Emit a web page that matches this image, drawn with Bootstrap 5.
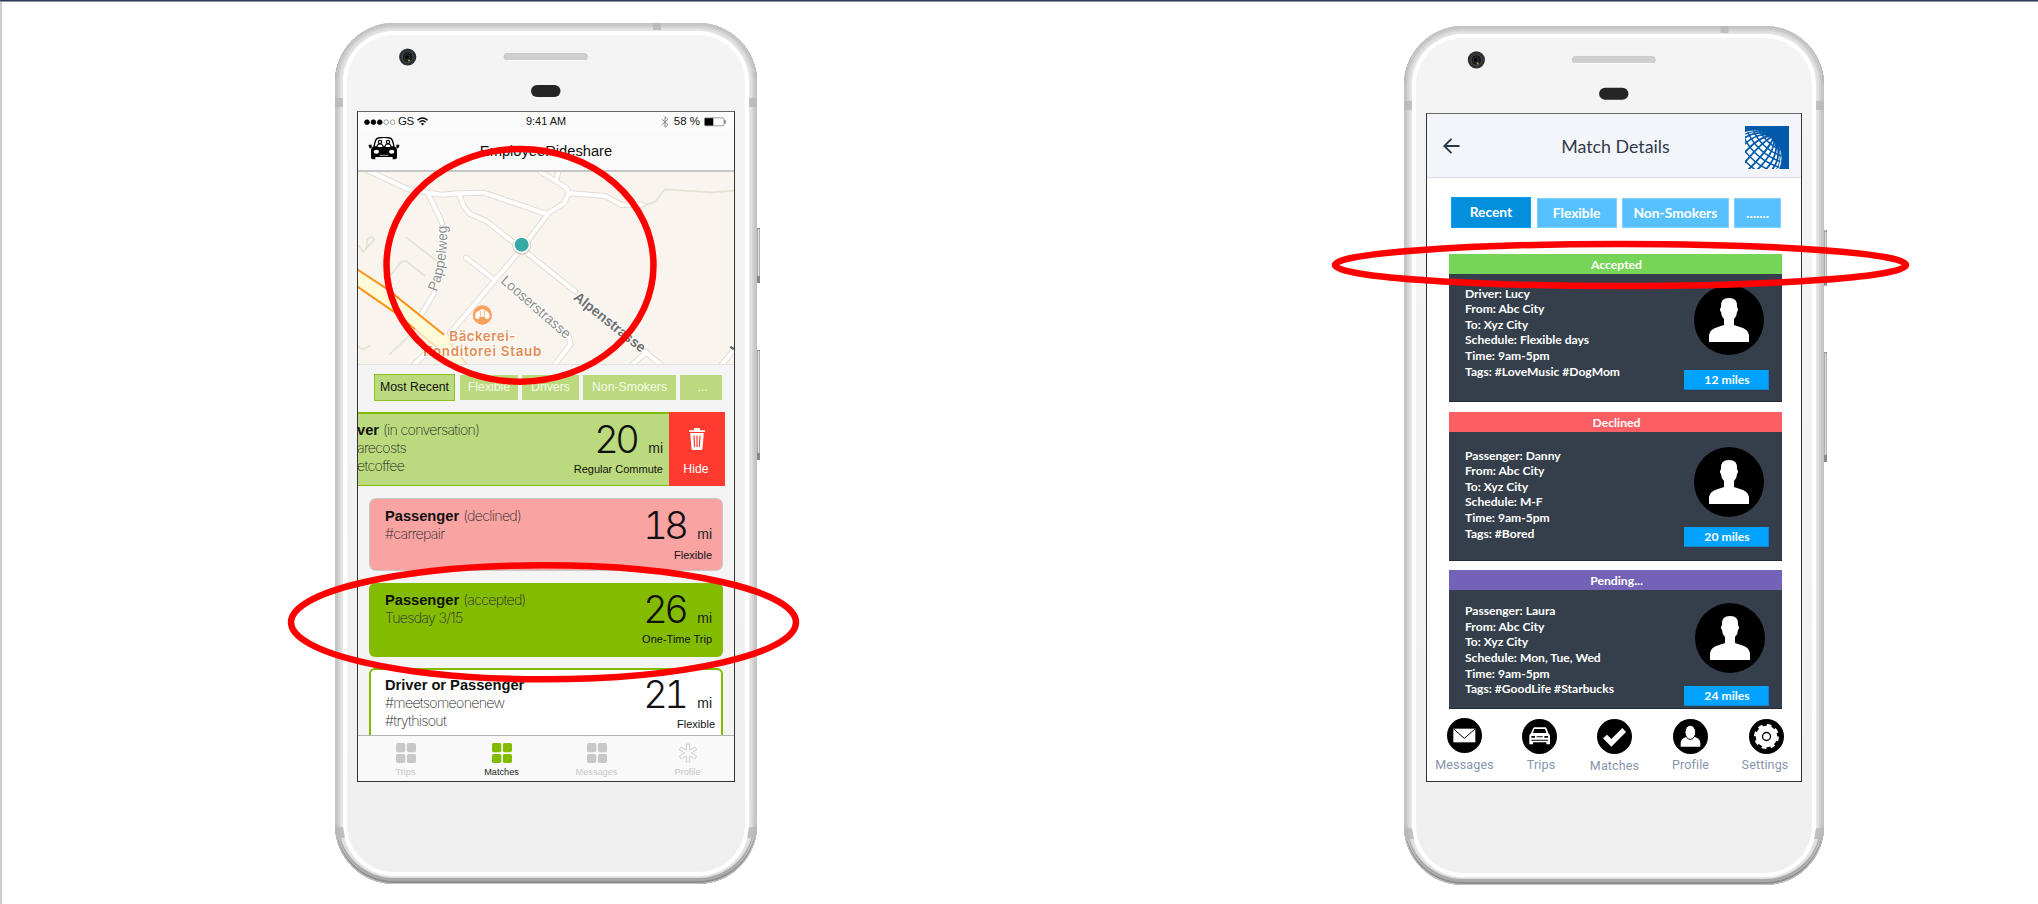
<!DOCTYPE html>
<html lang="en">
<head>
<meta charset="utf-8">
<meta name="viewport" content="width=device-width, initial-scale=1">
<title>Rideshare matches</title>
<link href="https://cdn.jsdelivr.net/npm/bootstrap@5.3.0/dist/css/bootstrap.min.css" rel="stylesheet">
<style>
body{background:#fff;font-family:"Liberation Sans",Arial,sans-serif;color:#111;overflow:hidden}
.stage{width:2038px;height:904px;border-top:1px solid #2d3a55;overflow:hidden}
.stage::before{content:"";position:absolute;left:0;right:0;top:0;height:1px;background:#8f96a8}
.stage::after{content:"";position:absolute;left:0;top:1px;bottom:0;width:2px;background:#ccc}
/* handset shell */
.phone{border-radius:59px;background:linear-gradient(#f4f4f4,#efefef);
 box-shadow:inset 0 0 0 1px #c3c3c3,inset 0 -2px 0 1px #8d8d8d,inset 0 0 0 3px #c6c6c6,inset 0 -3px 0 3px #a9a9a9,inset 0 0 0 5px #d3d3d3,inset 0 0 0 7px #e0e0e0,inset 0 0 0 8px #e8e8e8,inset 0 0 1px 12px #fff}
.phone-a{width:422px;height:861px;margin:22px 0 0 335px;padding:88px 22px 0}
.phone-b{width:420px;height:859px;margin:25px 0 0 647px;padding:87px 22px 0}
.shell{left:0;top:0;overflow:visible;pointer-events:none}
.screen{border:1px solid #333;border-top:1px solid #666;overflow:hidden}
.phone-a .screen{width:378px;height:671px;background:#f4f4f4}
.phone-b .screen{width:376px;height:669px;background:#fff;font-family:Lato,sans-serif}
.ring{overflow:visible;pointer-events:none;z-index:5;left:0;top:0}
/* first app */
.status{height:19px;background:#fbfbfb;font-size:11.5px;line-height:19px;padding:0 8px 0 5px}
.status>*{flex:1 1 0}
.clock{font-size:10.9px;padding-left:3px}
.app-head{height:41px;background:#fafafa;border-bottom:2px solid #c6c6c8}
.app-title{font-size:14.7px;line-height:20px;padding-top:10px}
.filters{height:48px;padding:9px 11px 0 16px;gap:4px;border-top:1px solid #e2e2e2}
.chip{height:25px;line-height:25px;font-size:12.3px;background:#bbd97d;color:#f7fbe9;text-align:center;margin-top:1px}
.chip.on{background:#bbd97d;border:1px solid #8cc11f;color:#111;line-height:25px;height:27px;margin:0 1px 0 0}
.trip{position:relative;height:74px;width:354px;margin:0 0 11px 11px;padding:8px 11px 0 16px;border-radius:6px;font-size:14.7px;line-height:18px}
.trip b{letter-spacing:-.02px}
.thin{font-family:Inter,sans-serif;font-weight:200;font-size:14.2px;letter-spacing:-.7px;color:#2a2a2a}
.sum{text-align:right}
.dist{height:36px;line-height:36px;font-family:Inter,sans-serif;font-weight:300;font-size:38px;font-variant-numeric:tabular-nums;letter-spacing:-3.6px;white-space:nowrap}
.dist small{font:14px "Liberation Sans",sans-serif;letter-spacing:0;margin-left:12px;color:#222}
.kind{font-size:11px;line-height:16px;margin-top:4px;white-space:nowrap}
.t-talk{background:#bbd97d;border-top:2px solid #82bb00;border-bottom:1px solid #82bb00;border-radius:0;margin-left:0;width:311px;padding:7px 6px 0 0}
.t-talk .who{margin-left:-1px}
.t-no{background:#f9a3a2;box-shadow:0 0 0 1px #c9c9c9}
.t-yes{background:#82bb00}
.t-open{background:#fff;border:2px solid #82bb00;padding:6px 6px 0 14px}
.hide-btn{width:56px;height:74px;background:#ff3b30;color:#fff;font-size:12.3px;line-height:16px;padding-top:16px}
.tabs{height:46px;background:#f9f9f9;border-top:1px solid #b5b5b5;bottom:0;left:0;width:376px;font-size:9.2px;line-height:12px;color:#c8c8c8;padding-top:7px}
.tabs>div,.dock>div{flex:none}
/* second app */
.bar-b{height:64px;background:#f4f5fa;border-bottom:1px solid #d9dae2}
.title-b{font-size:17.8px;line-height:24px;color:#2f3b4a}
.pills{height:76px;padding:19px 20px 0 24px}
.pill{background:#57c1ff;border:1px solid #7ed0ff;color:#fff;font-weight:700;font-size:13.8px;line-height:27px;height:30px;text-align:center}
.pill.on{background:#048fdd;border-color:#00a1ff;height:31px;line-height:28px}
.match{width:333px;margin-left:22px;color:#fff;font-weight:700;font-size:12.1px}
.match-h{height:20px;line-height:21px;text-align:center;font-size:12.2px;padding-left:2px}
.match-b{height:129px;background:#353f4b;line-height:15.65px;padding:0 13px 0 16px;border-bottom:1px solid #222c38}
.miles{width:85px;height:20px;line-height:20px;background:#00a2ff;text-align:center;font-size:12.2px;border:1px solid #0d86cf;border-width:0 1px 1px 0;padding-left:2px}
.dock{font-family:Roboto,sans-serif;font-size:12.5px;line-height:14px;color:#8694ab;letter-spacing:.15px;padding-top:9px}
.dock svg,.tabs svg{display:block;margin:0 auto}
</style>
</head>
<body>
<svg width="0" height="0" class="position-absolute">
 <defs>
  <symbol id="face" viewBox="0 0 70 70"><ellipse cx="35" cy="35" rx="35" ry="35"/><path fill="#fff" d="M15 57V50Q16 44 24 42L30 40V34Q27 31 27 27Q25 25 27 22Q26 13 35 13Q44 13 43 22Q45 25 43 27Q43 31 40 34V40L46 42Q54 44 55 50V57Z"/></symbol>
  <symbol id="grid4" viewBox="0 0 20 20"><g fill="currentColor"><rect width="9.3" height="9.3" rx="1.7"/><rect x="10.9" width="9.1" height="9.3" rx="1.7"/><rect y="11" width="9.3" height="9" rx="1.7"/><rect x="10.9" y="11" width="9.1" height="9" rx="1.7"/></g></symbol>
  <linearGradient id="key"><stop stop-color="#777"/><stop offset=".4" stop-color="#eee"/><stop offset="1" stop-color="#999"/></linearGradient>
  <symbol id="shell" viewBox="0 0 426 861">
   <g fill="#b8b8b8" opacity=".85"><rect x="318" y="0" width="8" height="7"/><rect y="75" width="8" height="9"/><rect x="414" y="75" width="8" height="9"/><path d="M0 804H8L10 815H2ZM422 804H414L412 815H420Z"/></g>
   <g fill="url(#key)"><rect x="422" y="205" width="3" height="55"/><rect x="422" y="327" width="3" height="110"/></g>
   <path fill="#888" d="M422 253h3v7h-3zM422 430h3v7h-3zM422 205h3v1h-3zM422 327h3v1h-3z"/>
   <circle cx="72.7" cy="34" r="8.6" fill="#2e2f31"/><circle cx="72.7" cy="34" r="5.4" fill="#17181a" stroke="#4b4c4f"/><circle cx="72" cy="34" r="2.5" fill="#050505" stroke="#333"/><circle cx="74" cy="37.5" r="1.1" fill="#8c9b2e"/>
   <rect x="169" y="30.5" width="83.5" height="6.5" rx="3.2" fill="#cfcfcf" stroke="#bababa" stroke-width=".6"/><path d="M172 37.4h78" stroke="#fff"/>
   <rect x="196" y="62" width="29.5" height="12" rx="6" fill="#252525"/>
  </symbol>
  <path id="roads" d="M80 30L205 88 305 104 355 100 430 98 620 162 672 130 686 100 680 84 600 34M650 55L656 30M690 100L795 108 845 135 908 134M265 104L296 165 306 190M282 400L240 470M358 104L372 140 390 162 440 184 545 266 625 160M545 266L330 520M545 266L706 395M378 293L464 360M684 520L692 552 640 620M915 575L970 620M920 576L870 620M1182 570L1140 620M275 565L215 620"/>
 </defs>
</svg>

<main class="stage position-relative d-flex align-items-start">
 <section class="phone phone-a position-relative flex-shrink-0">
  <svg class="shell position-absolute" width="426" height="861"><use href="#shell"/></svg>
  <div class="screen position-relative">
   <div class="status d-flex align-items-center">
    <div class="d-flex align-items-center">
     <svg width="33" height="8" viewBox="0 0 33 8"><g stroke="#000" stroke-width=".7"><circle cx="4" cy="4.2" r="2.4"/><circle cx="10.4" cy="4.2" r="2.4"/><circle cx="16.8" cy="4.2" r="2.4"/></g><g fill="none" stroke="#777" stroke-width=".7"><circle cx="23.2" cy="4.2" r="2.3"/><circle cx="29.6" cy="4.2" r="2.3"/></g></svg>
     <span style="margin-left:2px;letter-spacing:-.5px">GS</span>
     <svg style="margin-left:3px" width="11" height="9" viewBox="0 0 11 9" fill="none" stroke="#000" stroke-width="1.4"><path d="M.5 3.2Q5.5-1.2 10.5 3.2M2.4 5.2Q5.5 2.5 8.6 5.2"/><path d="M3.8 6.6L5.5 8.6 7.2 6.6Q5.5 5.4 3.8 6.6Z" fill="#000" stroke="none"/></svg>
    </div>
    <div class="clock text-center">9:41 AM</div>
    <div class="d-flex align-items-center justify-content-end">
     <svg width="8" height="12" viewBox="0 0 8 12" fill="none" stroke="#8a8a8a"><path d="M.8 3.2L7 8.6 4 11.3V.7L7 3.4.8 8.8"/></svg>
     <span style="font-size:11.5px;margin:0 4px 0 5px">58 %</span>
     <svg width="22" height="10" viewBox="0 0 22 10"><rect x=".5" y=".8" width="19.5" height="8" rx="1.2" fill="none" stroke="#777" stroke-width=".7"/><path d="M.8 1.2H9.3V8.5H.8Z"/><path d="M21 3.3v3" stroke="#333"/></svg>
    </div>
   </div>
   <div class="app-head position-relative">
    <svg class="position-absolute" style="left:10px;top:6px" width="32" height="23" viewBox="0 0 96 69">
     <path d="M18 30Q22 4 30 3Q48-1 66 3Q74 4 78 30" fill="none" stroke="#000" stroke-width="4"/>
     <path d="M9 38Q12 28 22 28H74Q84 28 87 38V61Q87 67 81 67H74V60H22V67H15Q9 67 9 61Z"/>
     <path d="M2 23h9v11H6q-5-5-4-11ZM94 23h-9v11h5q5-5 4-11Z"/>
     <g fill="#fff" stroke="#000" stroke-width="3.5"><circle cx="36" cy="15" r="5"/><circle cx="60" cy="15" r="5"/><path d="M27 30q0-9 9-9t9 9M51 30q0-9 9-9t9 9"/></g>
     <ellipse cx="25" cy="44" rx="8" ry="6" fill="#fff"/><ellipse cx="71" cy="44" rx="8" ry="6" fill="#fff"/><path d="M35 55h26" stroke="#fff" stroke-width="2"/>
    </svg>
    <div class="app-title text-center">EmployeeRideshare</div>
   </div>
   <svg class="d-block" width="376" height="192" viewBox="54 36 1128 576" font-family="Liberation Sans,sans-serif">
    <path fill="#f9f4ed" d="M54 36h1128v576H54z"/>
    <g fill="none" stroke="#e3e2d5" stroke-width="5"><path d="M198 232L290 303M148 350L185 304 200 304 255 348M54 560L70 568 92 556M148 584L240 495M54 255L70 275 104 238 95 230 82 238 78 270M900 140L945 125 975 88 1115 97 1182 92"/></g>
    <use href="#roads" fill="none" stroke="#e2dcd7" stroke-width="18" stroke-linejoin="round" stroke-linecap="round"/>
    <use href="#roads" fill="none" stroke="#fff" stroke-width="12" stroke-linejoin="round" stroke-linecap="round"/>
    <path d="M50 327L312 524 380 612 320 612 220 502 50 378Z" fill="#fffbd8"/>
    <path d="M50 327L140 386 312 524M50 378L165 458 225 508" fill="none" stroke="#fb9418" stroke-width="6"/><path d="M225 508L300 570M330 550L380 612" stroke="#f9d6a0" stroke-width="4"/>
    <circle cx="545" cy="256" r="28" fill="#cfc9c1"/><circle cx="545" cy="254" r="26" fill="#fff"/><circle cx="545" cy="254" r="21" fill="#36aaa2"/>
    <path id="pap" d="M290 396Q328 300 319 188" fill="none"/>
    <g fill="#8e8e8e" stroke="#fff" stroke-width="5" paint-order="stroke">
     <text textLength="203" lengthAdjust="spacingAndGlyphs" font-size="43"><textPath href="#pap">Pappelweg</textPath></text>
     <text transform="translate(480 366) rotate(41)" textLength="262" lengthAdjust="spacingAndGlyphs" font-size="43">Looserstrasse</text>
     <text transform="translate(698 416) rotate(38.5)" textLength="262" lengthAdjust="spacingAndGlyphs" font-size="43" font-weight="bold" fill="#717171">Alpenstrasse</text>
    </g>
    <path d="M1171 560L1182 568" stroke="#666" stroke-width="7"/>
    <circle cx="427" cy="465" r="29" fill="#f7a15c"/><path d="M407 475Q402 458 415 453 427 442 439 453 452 458 447 475L438 478 435 470H419L416 478Z" fill="#fff"/><path d="M420 452l2 16M434 452l-2 16" stroke="#f7a15c" stroke-width="2.5"/>
    <g font-size="40" font-weight="600" fill="#e18d55" stroke="#fff" stroke-width="5" paint-order="stroke" font-family="Inter,sans-serif"><text x="328" y="543" textLength="198">Bäckerei-</text><text x="250" y="587" textLength="354">Konditorei Staub</text></g>
   </svg>
   <div class="filters d-flex">
    <div class="chip on" style="width:81px">Most Recent</div><div class="chip" style="width:58px">Flexible</div><div class="chip" style="width:57px">Drivers</div><div class="chip" style="width:93px">Non-Smokers</div><div class="chip" style="width:42px;padding-left:3px">...</div>
   </div>
   <div class="d-flex">
    <div class="trip t-talk d-flex justify-content-between">
     <div class="who"><b>ver</b> <span class="thin">(in conversation)</span><br><span class="thin">arecosts</span><br><span class="thin">etcoffee</span></div>
     <div class="sum"><div class="dist">20<small>mi</small></div><div class="kind">Regular Commute</div></div>
    </div>
    <div class="hide-btn text-center">
     <svg class="d-block mx-auto" width="16" height="22" viewBox="0 0 16 22"><path d="M0 2.2H5V.8Q5 0 6 0H10Q11 0 11 .8V2.2H16V4H0ZM1.2 5H14.8L13.5 20.5Q13.4 22 12 22H4Q2.6 22 2.5 20.5Z" fill="#fff"/><path d="M5 7.5L5.6 19M8 7.5V19M11 7.5L10.4 19" stroke="#ff3b30" stroke-width="1.2"/></svg>
     <div style="margin-top:11px;margin-right:2px">Hide</div>
    </div>
   </div>
   <div class="trip t-no d-flex justify-content-between" style="height:71px;width:352px;margin:2px 0 13px 12px;padding-left:15px;padding-right:10px">
    <div><b>Passenger</b> <span class="thin">(declined)</span><br><span class="thin">#carrepair</span></div>
    <div class="sum"><div class="dist">18<small>mi</small></div><div class="kind">Flexible</div></div>
   </div>
   <div class="trip t-yes d-flex justify-content-between">
    <div><b>Passenger</b> <span class="thin">(accepted)</span><br><span class="thin">Tuesday 3/15</span></div>
    <div class="sum"><div class="dist">26<small>mi</small></div><div class="kind">One-Time Trip</div></div>
   </div>
   <div class="trip t-open d-flex justify-content-between" style="height:90px">
    <div><b>Driver or Passenger</b><br><span class="thin">#meetsomeonenew</span><br><span class="thin">#trythisout</span></div>
    <div class="sum"><div class="dist" style="padding-right:3px">21<small>mi</small></div><div class="kind">Flexible</div></div>
   </div>
   <nav class="tabs position-absolute d-flex text-center">
    <div style="width:95px"><svg width="20" height="20"><use href="#grid4"/></svg><div style="margin-top:3px">Trips</div></div>
    <div style="width:97px;color:#82bb00"><svg width="20" height="20"><use href="#grid4"/></svg><div style="margin-top:3px;color:#222">Matches</div></div>
    <div style="width:93px"><svg width="20" height="20"><use href="#grid4"/></svg><div style="margin-top:3px">Messages</div></div>
    <div style="width:89px"><svg width="20" height="20" viewBox="0 0 20 20"><path d="M8.4 1H11.6V7.2L17 4.1 18.6 6.9 13.2 10 18.6 13.1 17 15.9 11.6 12.8V19H8.4V12.8L3 15.9 1.4 13.1 6.8 10 1.4 6.9 3 4.1 8.4 7.2Z" fill="none" stroke="#cfcfcf"/></svg><div style="margin-top:3px">Profile</div></div>
   </nav>
  </div>
 </section>

 <section class="phone phone-b position-relative flex-shrink-0">
  <svg class="shell position-absolute" width="424" height="859" viewBox="0 0 426 861" preserveAspectRatio="none"><use href="#shell" width="426" height="861"/></svg>
  <div class="screen position-relative">
   <header class="bar-b d-flex align-items-center justify-content-between position-relative">
    <svg style="margin-left:16px" width="17" height="16" viewBox="0 0 17 16" fill="none" stroke="#2b3847" stroke-width="1.9"><path d="M16.5 8H1.5M8.5 .8L1.3 8 8.5 15.2"/></svg>
    <div class="title-b" style="margin-left:26px">Match Details</div>
    <svg style="margin-right:12px;margin-top:3px" width="44" height="43" viewBox="0 0 44 43">
     <path fill="#0059ab" d="M0 0h44v43H0z"/>
     <circle cx="9" cy="32" r="27.5" fill="#fff"/>
     <g transform="rotate(42 9 32)" fill="none" stroke="#0059ab" stroke-width="1.8">
      <ellipse cx="9" cy="32" rx="4" ry="27.5"/><ellipse cx="9" cy="32" rx="10.5" ry="27.5"/><ellipse cx="9" cy="32" rx="16.5" ry="27.5"/><ellipse cx="9" cy="32" rx="21.5" ry="27.5"/><ellipse cx="9" cy="32" rx="25" ry="27.5" stroke-width="1"/>
      <path stroke-width="1.4" d="M-5 8Q9 13 23 8M-10 12Q9 20 28 12M-13 17Q9 26 31 17M-16 22Q9 33 34 22M-18 28Q9 40 36 28M-19 34Q9 47 37 34M-18 41Q9 53 36 41"/>
     </g>
    </svg>
   </header>
   <div class="pills d-flex">
    <div class="pill on" style="width:80px">Recent</div><div class="pill" style="width:80px;margin:1px 5px 0 6px">Flexible</div><div class="pill" style="width:108px;margin-top:1px">Non-Smokers</div><div class="pill" style="width:47px;margin:1px 0 0 5px">.......</div>
   </div>
   <article class="match" style="margin-bottom:10px">
    <div class="match-h" style="background:#76d457">Accepted</div>
    <div class="match-b d-flex justify-content-between" style="height:128px">
     <div style="padding-top:11.5px">Driver: Lucy<br>From: Abc City<br>To: Xyz City<br>Schedule: Flexible days<br>Time: 9am-5pm<br>Tags: #LoveMusic #DogMom</div>
     <div style="padding-top:11px"><svg class="d-block" style="margin:0 0 15px 10px" width="70" height="70"><use href="#face"/></svg><div class="miles">12 miles</div></div>
    </div>
   </article>
   <article class="match" style="margin-bottom:9px">
    <div class="match-h" style="background:#fb5f63">Declined</div>
    <div class="match-b d-flex justify-content-between">
     <div style="padding-top:15.5px">Passenger: Danny<br>From: Abc City<br>To: Xyz City<br>Schedule: M-F<br>Time: 9am-5pm<br>Tags: #Bored</div>
     <div style="padding-top:15px"><svg class="d-block" style="margin:0 0 10px 10px" width="70" height="70"><use href="#face"/></svg><div class="miles">20 miles</div></div>
    </div>
   </article>
   <article class="match">
    <div class="match-h" style="background:#7462b8">Pending...</div>
    <div class="match-b d-flex justify-content-between" style="height:119px">
     <div style="padding-top:13px">Passenger: Laura<br>From: Abc City<br>To: Xyz City<br>Schedule: Mon, Tue, Wed<br>Time: 9am-5pm<br>Tags: #GoodLife #Starbucks</div>
     <div style="padding-top:13px"><svg class="d-block" style="margin:0 0 13px 10px" width="70" height="70"><use href="#face"/></svg><div class="miles" style="margin-left:-1px">24 miles</div></div>
    </div>
   </article>
   <nav class="dock d-flex text-center">
    <div style="width:75px"><svg width="35" height="35" viewBox="0 0 105 105"><circle cx="52.5" cy="52.5" r="52.5"/><path d="M19 32H85V73H19Z" fill="#fff"/><path d="M20 33L52 61 84 33" fill="none" stroke="#000" stroke-width="3"/></svg><div style="margin-top:5px">Messages</div></div>
    <div style="width:75px"><svg style="margin-top:1px" width="35" height="35" viewBox="0 0 105 105"><circle cx="52.5" cy="52.5" r="52.5"/><path d="M37 25H70Q73 25 75 31L79 43Q84 46 84 51V76H73V70H33V76H22V51Q22 46 27 43L32 31Q34 25 37 25Z" fill="#fff"/><path d="M37 30H69L73 42H33ZM28 51h11v5H28zM67 51h11v5H67zM44 52h18v3H44zM28 62h50v3H28z"/></svg><div style="margin-top:4px;margin-left:3px">Trips</div></div>
    <div style="width:75px"><svg style="margin-top:1px" width="35" height="35" viewBox="0 0 105 105"><circle cx="52.5" cy="52.5" r="52.5"/><path d="M18 58L30 47 43 60 76 27 87 39 43 83Z" fill="#fff"/></svg><div style="margin-top:5px">Matches</div></div>
    <div style="width:77px"><svg style="margin-top:1px" width="35" height="35" viewBox="0 0 105 105"><circle cx="52.5" cy="52.5" r="52.5"/><path d="M23 83V74Q23 61 34 56L44 52H61L71 56Q82 61 82 74V83Z" fill="#fff"/><ellipse cx="52" cy="40" rx="16" ry="21" fill="#fff" stroke="#000" stroke-width="3"/></svg><div style="margin-top:4px">Profile</div></div>
    <div style="width:75px"><svg style="margin-top:1px" width="35" height="35" viewBox="0 0 105 105"><circle cx="52.5" cy="52.5" r="52.5"/><circle cx="52.5" cy="52.5" r="34" fill="none" stroke="#fff" stroke-width="7" stroke-dasharray="14 12.7"/><circle cx="52.5" cy="52.5" r="32" fill="#fff"/><circle cx="52.5" cy="52.5" r="12" fill="#fff" stroke="#000" stroke-width="4"/></svg><div style="margin-top:4px;margin-right:3px">Settings</div></div>
   </nav>
  </div>
 </section>

 <!-- callouts drawn over the handsets -->
 <svg class="ring position-absolute" style="top:-1px" width="2038" height="904" fill="none" stroke="#f00" stroke-width="6.5">
  <ellipse cx="520" cy="265.3" rx="133.5" ry="116.4"/>
  <ellipse cx="543.5" cy="622.3" rx="252.5" ry="57"/>
  <ellipse cx="1620.5" cy="265" rx="285.5" ry="21"/>
 </svg>
</main>
<script src="https://cdn.jsdelivr.net/npm/bootstrap@5.3.0/dist/js/bootstrap.bundle.min.js"></script>
</body>
</html>
